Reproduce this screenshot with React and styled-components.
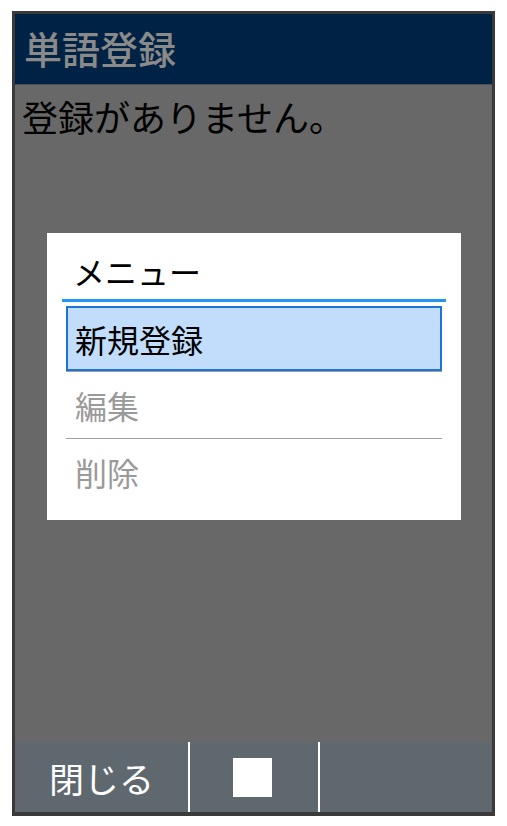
import React from "react";
import styled, { createGlobalStyle } from "styled-components";

const items = [
  { label: "新規登録", selected: true },
  { label: "編集", disabled: true },
  { label: "削除", disabled: true },
];

const App = () => {
  return (
    <>
      <GlobalStyle />
      <Frame>
        <Header>単語登録</Header>
        <Body>
          <Message>登録がありません。</Message>
          <Dialog>
            <DialogTitle>メニュー</DialogTitle>
            <MenuList>
              {items.map(({ label, selected, disabled }) => (
                <MenuItem key={label} $selected={selected} $disabled={disabled}>
                  {label}
                </MenuItem>
              ))}
            </MenuList>
          </Dialog>
        </Body>
        <Footer>
          <SoftKey $width="173px">閉じる</SoftKey>
          <Divider />
          <SoftKey $width="128px" $shift="3px">
            <Square />
          </SoftKey>
          <Divider />
          <SoftKey $grow />
        </Footer>
      </Frame>
    </>
  );
};

export default App;

const GlobalStyle = createGlobalStyle`
  body {
    margin: 0;
    background: #ffffff;
    font-family: "Noto Sans CJK JP", "Noto Sans", sans-serif;
  }
`;

const Frame = styled.div`
  box-sizing: border-box;
  margin: 11px 0 0 12px;
  width: 483px;
  height: 805px;
  border: 3px solid #3a3a3a;
  border-bottom-width: 4px;
  display: flex;
  flex-direction: column;
  background: #686868;
`;

const Header = styled.div`
  height: 71px;
  flex-shrink: 0;
  background: #002244;
  color: #8a8a8a;
  font-size: 38px;
  font-weight: 500;
  line-height: 68px;
  padding-left: 9px;
  border-bottom: 1px solid #4a4f55;
  box-sizing: border-box;
`;

const Body = styled.div`
  flex: 1;
  display: flex;
  flex-direction: column;
  align-items: center;
`;

const Message = styled.div`
  align-self: stretch;
  padding: 11px 0 0 7px;
  font-size: 36px;
  line-height: 40px;
  color: #000000;
`;

const Dialog = styled.div`
  margin-top: 97px;
  width: 414px;
  height: 287px;
  background: #ffffff;
  box-sizing: border-box;
  padding: 0 15px;
  margin-left: 1px;
`;

const DialogTitle = styled.div`
  height: 69px;
  box-sizing: border-box;
  padding: 18px 0 0 11px;
  font-size: 32px;
  line-height: 40px;
  color: #000000;
  border-bottom: 3px solid #2196f3;
`;

const MenuList = styled.div`
  padding: 4px 4px 0;
  display: flex;
  flex-direction: column;
`;

const MenuItem = styled.div`
  height: 65px;
  box-sizing: border-box;
  display: flex;
  align-items: center;
  padding-left: ${({ $selected }) => ($selected ? "7px" : "9px")};
  font-size: 32px;
  color: ${({ $disabled }) => ($disabled ? "#9a9a9a" : "#000000")};
  background: ${({ $selected }) => ($selected ? "#c1ddfb" : "transparent")};
  border: ${({ $selected }) => ($selected ? "2px solid #1e73d8" : "none")};
  box-shadow: 0 1px 0 #9e9e9e;
  margin-bottom: 1px;
  &:nth-child(2) {
    height: 66px;
  }
  &:last-child {
    box-shadow: none;
  }
`;

const Footer = styled.div`
  height: 70px;
  flex-shrink: 0;
  display: flex;
  background: #5f686f;
`;

const SoftKey = styled.div`
  width: ${({ $width }) => $width || "auto"};
  flex: ${({ $grow }) => ($grow ? 1 : "none")};
  box-sizing: border-box;
  padding-right: ${({ $shift }) => $shift || "0"};
  display: flex;
  align-items: center;
  justify-content: center;
  color: #ffffff;
  font-size: 35px;
`;

const Divider = styled.div`
  width: 2px;
  background: #ffffff;
`;

const Square = styled.div`
  width: 39px;
  height: 39px;
  background: #ffffff;
`;
